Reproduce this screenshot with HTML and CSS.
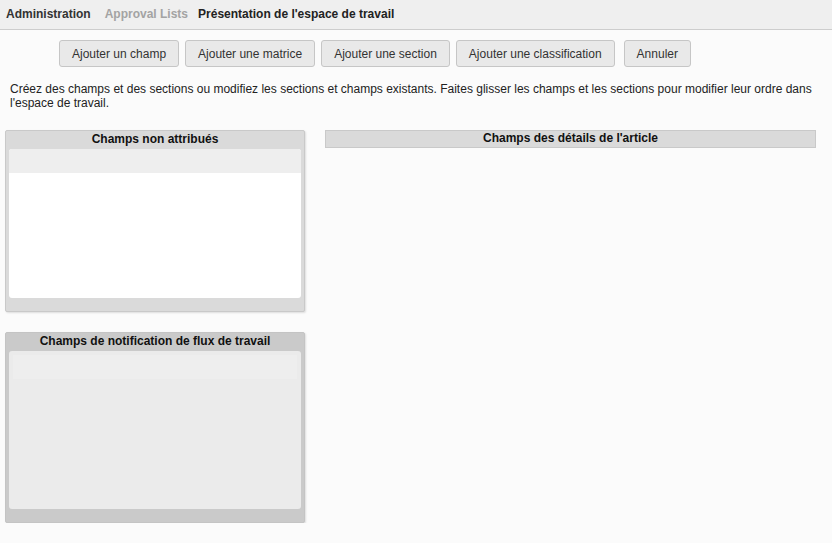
FILE: index.html
```html
<!DOCTYPE html>
<html lang="fr">
<head>
<meta charset="utf-8">
<title>Présentation de l'espace de travail</title>
<link rel="stylesheet" href="styles.css">
</head>
<body>
<div class="topbar">
  <span class="crumb">Administration</span>
  <span class="crumb muted">Approval Lists</span>
  <span class="crumb current">Présentation de l'espace de travail</span>
</div>
<div class="toolbar">
  <button class="btn">Ajouter un champ</button>
  <button class="btn">Ajouter une matrice</button>
  <button class="btn">Ajouter une section</button>
  <button class="btn">Ajouter une classification</button>
  <button class="btn cancel">Annuler</button>
</div>
<p class="intro">Créez des champs et des sections ou modifiez les sections et champs existants. Faites glisser les champs et les sections pour modifier leur ordre dans l'espace de travail.</p>
<div class="layout">
  <div class="leftcol">
    <div class="panel">
      <div class="panel-title">Champs non attribués</div>
      <div class="panel-body">
        <div class="strip"></div>
      </div>
    </div>
    <div class="panel dark">
      <div class="panel-title">Champs de notification de flux de travail</div>
      <div class="panel-body">
        <div class="strip"></div>
      </div>
    </div>
  </div>
  <div class="rightcol">
    <div class="section-head">Champs des détails de l'article</div>
  </div>
</div>
</body>
</html>
```

FILE: styles.css
```css
html, body {
  margin: 0;
  padding: 0;
}
body {
  background: #fbfbfb;
  font-family: "Liberation Sans", Arial, sans-serif;
  font-size: 12px;
  color: #222;
}
.topbar {
  height: 30px;
  box-sizing: border-box;
  background: #efefef;
  border-bottom: 1px solid #cdcdcd;
  display: flex;
  align-items: center;
  padding: 0 0 1px 6px;
}
.crumb {
  font-weight: bold;
  color: #333;
  margin-right: 14px;
}
.crumb.muted {
  color: #a3a3a3;
  margin-right: 10px;
}
.crumb.current {
  color: #222;
}
.toolbar {
  display: flex;
  padding: 10px 0 0 60px;
  gap: 6px;
}
.btn {
  font-family: "Liberation Sans", Arial, sans-serif;
  font-size: 12px;
  color: #333;
  background: #e9e9e9;
  border: 1px solid #c6c6c6;
  border-radius: 3px;
  height: 27px;
  padding: 0 12px;
  margin: 0;
}
.btn:first-child {
  margin-left: -1px;
}
.btn.cancel {
  margin-left: 3px;
}
.intro {
  margin: 15px 12px 0 10px;
  line-height: 14px;
  color: #222;
}
.layout {
  display: flex;
  padding: 20px 0 0 5px;
  gap: 20px;
}
.leftcol {
  width: 300px;
  display: flex;
  flex-direction: column;
  gap: 20px;
}
.rightcol {
  width: 491px;
}
.panel {
  background: #dadada;
  border: 1px solid #c9c9c9;
  border-radius: 2px;
  box-shadow: 1px 1px 2px rgba(0, 0, 0, 0.12);
  padding: 0 3px 13px 3px;
  box-sizing: border-box;
}
.panel-title {
  height: 18px;
  line-height: 17px;
  text-align: center;
  font-weight: bold;
  color: #111;
}
.panel-body {
  background: #ffffff;
  border-radius: 3px;
  height: 149px;
  overflow: hidden;
}
.strip {
  height: 24px;
  background: #eeeeee;
}
.panel.dark {
  background: #cacaca;
  border-color: #c4c4c4;
}
.panel.dark .panel-body {
  background: #ebebeb;
  height: 158px;
  padding: 4px 4px 0 4px;
  box-sizing: border-box;
}
.panel.dark .strip {
  height: 24px;
  background: #eeeeee;
}
.section-head {
  height: 18px;
  box-sizing: border-box;
  background: #dadada;
  border: 1px solid #c9c9c9;
  text-align: center;
  font-weight: bold;
  line-height: 15px;
  color: #111;
}
```
